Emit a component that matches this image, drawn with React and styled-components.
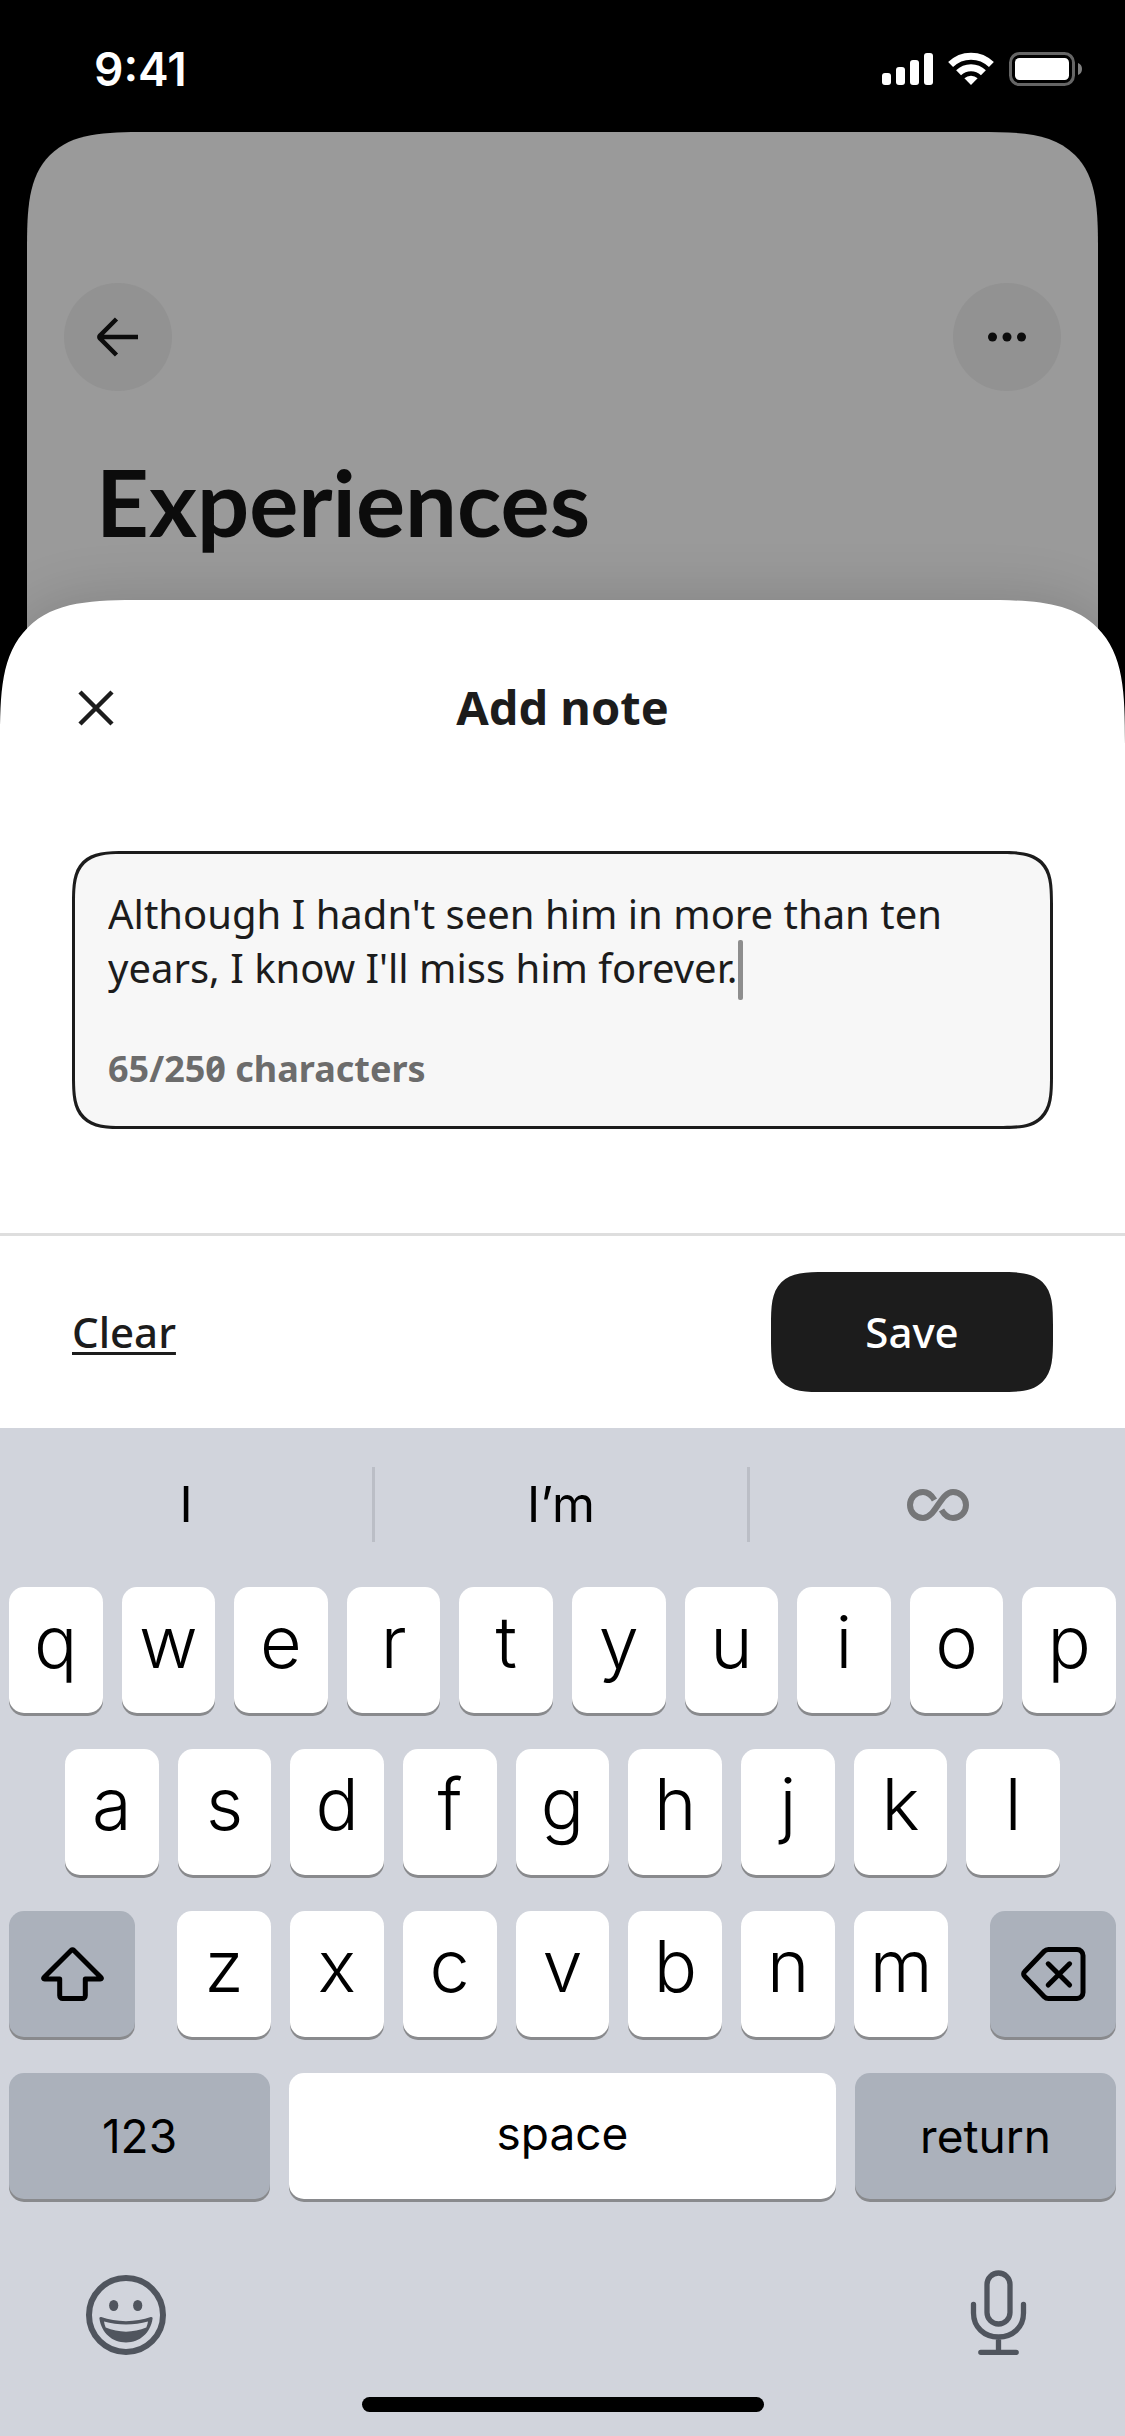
import React, { useState } from "react"
import styled, { createGlobalStyle, css } from "styled-components"

const systemFont = `Inter, "Liberation Sans", sans-serif`
const brandFont = `"Noto Sans", "Open Sans", sans-serif`

// Continuous corners where the browser has them, round ones elsewhere
const smoothCorners = (round, smooth, bottom = true) => css`
  border-radius: ${round}px ${round}px ${bottom ? round : 0}px ${bottom ? round : 0}px;
  @supports (corner-shape: superellipse(1.7)) {
    border-radius: ${smooth}px ${smooth}px ${bottom ? smooth : 0}px ${bottom ? smooth : 0}px;
    corner-shape: superellipse(1.7);
  }
`

const GlobalStyle = createGlobalStyle`
  * {
    box-sizing: border-box;
  }
  body {
    margin: 0;
    background: #000;
  }
  button, textarea {
    margin: 0;
    padding: 0;
    border: 0;
    background: none;
    color: inherit;
    font: inherit;
  }
  svg {
    display: block;
  }
`

const Screen = styled.div`
  display: flex;
  flex-direction: column;
  min-height: 100vh;
  background: #000;
  font-family: ${brandFont};
  color: #1c1c1c;
`

const StatusBar = styled.header`
  display: flex;
  justify-content: space-between;
  align-items: center;
  height: 132px;
  padding: 6px 43px 0 94px;
  color: #fff;
`

const Clock = styled.time`
  font-family: ${systemFont};
  font-size: 46px;
  font-weight: 600;
`

const StatusIcons = styled.div`
  display: flex;
  align-items: center;
  gap: 15px;
`

const Page = styled.main`
  margin: 0 27px;
  padding: 151px 37px 0;
  height: 568px;
  ${smoothCorners(80, 120, false)}
  background: #9a9a9a;
  color: #0c0c0c;
`

const Toolbar = styled.div`
  display: flex;
  justify-content: space-between;
`

const RoundButton = styled.button`
  display: flex;
  align-items: center;
  justify-content: center;
  width: 108px;
  height: 108px;
  border-radius: 50%;
  background: #929292;
`

const PageTitle = styled.h1`
  margin: 48px 0 0;
  padding: 0 32px;
  font-family: Lato, ${brandFont};
  font-size: 92px;
  font-weight: 700;
  line-height: 126px;
`

const Sheet = styled.section`
  margin-top: -100px;
  ${smoothCorners(96, 144, false)}
  background: #fff;
  box-shadow: 0 0 60px rgba(0, 0, 0, 0.16);
`

const SheetHeader = styled.div`
  display: grid;
  grid-template-columns: 48px 1fr 48px;
  align-items: center;
  height: 216px;
  padding: 0 72px;
`

const CloseButton = styled.button`
  display: flex;
  justify-content: center;
  padding: 6px 0;
`

const SheetTitle = styled.h2`
  margin: 0;
  padding-bottom: 2px;
  font-size: 47px;
  font-weight: 700;
  line-height: 64px;
  text-align: center;
`

const Field = styled.div`
  margin: 35px 72px 104px;
  padding: 33px;
  border: 3px solid #1c1c1c;
  ${smoothCorners(40, 54)}
  background: #f7f7f7;
`

const Editor = styled.div`
  display: grid;
  font-size: 40px;
  line-height: 54px;
`

const NoteInput = styled.textarea`
  grid-area: 1 / 1;
  width: 100%;
  overflow: hidden;
  resize: none;
  outline: none;
  caret-color: transparent;
`

// Same text as the textarea, it grows the grid cell and places the caret
const Mirror = styled.div`
  grid-area: 1 / 1;
  visibility: hidden;
  white-space: pre-wrap;
  overflow-wrap: break-word;
  pointer-events: none;
`

const Caret = styled.span`
  position: relative;
  &::after {
    content: "";
    position: absolute;
    top: 0;
    left: 0;
    width: 5px;
    height: 60px;
    border-radius: 2px;
    background: #8e8e8e;
    visibility: visible;
  }
`

const Counter = styled.p`
  margin: 50px 0 0;
  color: #6c6c6c;
  font-size: 36px;
  font-weight: 700;
  font-variant-numeric: slashed-zero;
  line-height: 48px;
`

const Actions = styled.footer`
  display: flex;
  justify-content: space-between;
  align-items: center;
  padding: 36px 72px;
  border-top: 3px solid #dedede;
  font-size: 42px;
  font-weight: 500;
`

const ActionButton = styled.button`
  padding-bottom: 2px;
`

const ClearButton = styled(ActionButton)`
  text-decoration: underline;
  text-decoration-thickness: 3px;
  text-underline-offset: 4px;
`

const SaveButton = styled(ActionButton)`
  width: 282px;
  height: 120px;
  ${smoothCorners(40, 54)}
  background: #1c1c1c;
  color: #fff;
`

const Keyboard = styled.section`
  flex: 1;
  display: flex;
  flex-direction: column;
  background: #d1d4dc;
  color: #000;
  font-family: ${systemFont};
`

const Suggestions = styled.div`
  display: grid;
  grid-template-columns: repeat(3, 1fr);
  padding: 39px 0 45px;
`

const Suggestion = styled.button`
  display: flex;
  align-items: center;
  justify-content: center;
  height: 75px;
  font-size: 49px;
  &:not(:last-child) {
    border-right: 3px solid #bbbec6;
  }
`

const Rows = styled.div`
  display: grid;
  gap: 36px;
`

const Row = styled.div`
  display: flex;
  gap: ${props => props.$wide ? "42px" : "19px"};
  padding: 0 ${props => props.$indent ? "65px" : "9px"};
`

const Letters = styled.div`
  flex: 1;
  display: flex;
  gap: 19px;
`

const Key = styled.button`
  flex: 1 1 0;
  display: flex;
  align-items: center;
  justify-content: center;
  min-width: 0;
  height: 126px;
  padding-bottom: 18px;
  border-radius: 15px;
  background: #fff;
  box-shadow: 0 3px 0 #898a8d;
  font-size: 72px;
  font-weight: 300;
`

const IconKey = styled(Key)`
  flex: 0 0 126px;
  padding: 0;
  background: #abb1bb;
`

const WordKey = styled(Key)`
  flex: ${props => props.$grow} 1 0;
  padding-bottom: ${props => props.$dark ? "0" : "6px"};
  background: ${props => props.$dark ? "#abb1bb" : "#fff"};
  font-size: 46px;
  font-weight: 400;
`

const KeyboardFooter = styled.div`
  display: flex;
  justify-content: space-between;
  align-items: flex-end;
  padding: 71px 98px 41px 85px;
  color: #50555e;
`

const HomeIndicator = styled.div`
  width: 402px;
  height: 15px;
  margin: 0 auto 24px;
  border-radius: 8px;
  background: #000;
`

const SignalIcon = () => (
  <svg width="51" height="33" viewBox="0 0 51 33" fill="#fff">
    <rect x="0" y="20" width="9" height="12" rx="3" />
    <rect x="14" y="14" width="9" height="18" rx="3" />
    <rect x="28" y="7" width="9" height="25" rx="3" />
    <rect x="42" y="0" width="9" height="32" rx="3" />
  </svg>
)

const WifiIcon = () => (
  <svg width="46" height="34" viewBox="0 0 46 34" fill="none" stroke="#fff" strokeWidth="7">
    <path d="M2.6 12.6a29 29 0 0 1 40.8 0" />
    <path d="M10.6 20.8a17.6 17.6 0 0 1 24.8 0" />
    <path d="M23 33l-6.6-6.7a9.5 9.5 0 0 1 13.2 0z" fill="#fff" stroke="none" />
  </svg>
)

const BatteryIcon = () => (
  <svg width="73" height="34" viewBox="0 0 73 34">
    <rect x="1.5" y="1.5" width="63" height="31" rx="9" fill="none" stroke="#666" strokeWidth="3" />
    <rect x="6" y="6" width="54" height="22" rx="4.5" fill="#fff" />
    <path d="M69 11c2.6 1 4 3.3 4 6s-1.4 5-4 6z" fill="#808080" />
  </svg>
)

const BackIcon = () => (
  <svg width="42" height="40" viewBox="0 0 42 40" fill="none" stroke="currentColor" strokeWidth="4.5">
    <path d="M41 20H2M19.5 2L3 18.5a2 2 0 0 0 0 3L19.5 38" />
  </svg>
)

const MoreIcon = () => (
  <svg width="38" height="10" viewBox="0 0 38 10" fill="currentColor">
    <circle cx="4.5" cy="5" r="4.5" />
    <circle cx="19" cy="5" r="4.5" />
    <circle cx="33.5" cy="5" r="4.5" />
  </svg>
)

const CloseIcon = () => (
  <svg width="36" height="36" viewBox="0 0 36 36" fill="none" stroke="#1c1c1c" strokeWidth="4.5">
    <path d="M2 2l32 32M34 2L2 34" />
  </svg>
)

const InfinityIcon = () => (
  <svg width="62" height="32" viewBox="0 0 62 32" fill="none" stroke="#757678" strokeWidth="6">
    <path d="M27.5 11C24.5 6 21 3 16 3C8.5 3 3 8.8 3 16S8.5 29 16 29C28.5 29 33.5 3 46 3C53.5 3 59 8.8 59 16S53.5 29 46 29C41 29 37.5 26 34.5 21" />
  </svg>
)

const ShiftIcon = () => (
  <svg width="63" height="54" viewBox="0 0 63 54" fill="none" stroke="#000" strokeWidth="5" strokeLinejoin="round">
    <path d="M30.3 3.2a1.7 1.7 0 0 1 2.4 0L60 30.5c.7.7.3 1.6-.6 1.6H44.3V48.5a3 3 0 0 1-3 3H21.7a3 3 0 0 1-3-3V32.1H3.6c-.9 0-1.3-.9-.6-1.6z" />
  </svg>
)

const DeleteIcon = () => (
  <svg width="65" height="54" viewBox="0 0 65 54" fill="none" stroke="#000" strokeWidth="5" strokeLinecap="round" strokeLinejoin="round">
    <path d="M27.5 2.5H56a6 6 0 0 1 6 6v37a6 6 0 0 1-6 6H27.5a6 6 0 0 1-4.3-1.8L3.6 29.3a3.2 3.2 0 0 1 0-4.6L23.2 4.3a6 6 0 0 1 4.3-1.8z" />
    <path d="M27.2 16.8l21.4 21.2M48.6 16.8L27.2 38" />
  </svg>
)

const EmojiIcon = () => (
  <svg width="82" height="82" viewBox="0 0 82 82" fill="currentColor">
    <circle cx="41" cy="41" r="37" fill="none" stroke="currentColor" strokeWidth="6" />
    <ellipse cx="28.7" cy="31.5" rx="4.6" ry="5.6" />
    <ellipse cx="52.7" cy="31.5" rx="4.6" ry="5.6" />
    <path fillRule="evenodd" d="M16.2 43C31 48.5 51 48.5 65.8 43c1.2-.4 2 .4 1.8 1.6C65.5 59 55 68.5 41 68.5S16.500 59 14.4 44.6c-.2-1.2.6-2 1.8-1.6zM19 47.6c.3 2 .8 4 1.7 6c12.8 5.4 27.8 5.4 40.6 0c.9-2 1.4-4 1.7-6c-14 3.8-30 3.8-44 0z" />
  </svg>
)

const MicIcon = () => (
  <svg width="57" height="86" viewBox="0 0 57 86" fill="none" stroke="currentColor" strokeWidth="5.3" strokeLinecap="round">
    <rect x="17" y="3" width="23" height="51" rx="11.5" />
    <path d="M3.5 34.5V43c0 14 10.5 24 25 24s25-10 25-24V34.5M28.5 67v15M10.8 82.3h35.4" />
  </svg>
)

const renderKeys = letters => letters.split("").map(letter => <Key key={letter}>{letter}</Key>)

const App = () => {
  const [note, setNote] = useState("Although I hadn't seen him in more than ten years, I know I'll miss him forever.")
  const [count, setCount] = useState(65)
  const updateNote = text => {
    setNote(text)
    setCount(text.length)
  }
  return (
    <Screen>
      <GlobalStyle />
      <StatusBar>
        <Clock>9:41</Clock>
        <StatusIcons>
          <SignalIcon />
          <WifiIcon />
          <BatteryIcon />
        </StatusIcons>
      </StatusBar>
      <Page>
        <Toolbar>
          <RoundButton aria-label="Back"><BackIcon /></RoundButton>
          <RoundButton aria-label="More"><MoreIcon /></RoundButton>
        </Toolbar>
        <PageTitle>Experiences</PageTitle>
      </Page>
      <Sheet>
        <SheetHeader>
          <CloseButton aria-label="Close"><CloseIcon /></CloseButton>
          <SheetTitle id="note-title">Add note</SheetTitle>
        </SheetHeader>
        <Field>
          <Editor>
            <Mirror aria-hidden="true">{note}<Caret /></Mirror>
            <NoteInput
              aria-labelledby="note-title"
              rows={1}
              maxLength={250}
              spellCheck={false}
              value={note}
              onChange={e => updateNote(e.target.value)}
            />
          </Editor>
          <Counter>{count}/250 characters</Counter>
        </Field>
        <Actions>
          <ClearButton onClick={() => updateNote("")}>Clear</ClearButton>
          <SaveButton>Save</SaveButton>
        </Actions>
      </Sheet>
      <Keyboard>
        <Suggestions>
          <Suggestion>I</Suggestion>
          <Suggestion>I’m</Suggestion>
          <Suggestion aria-label="Infinity"><InfinityIcon /></Suggestion>
        </Suggestions>
        <Rows>
          <Row>{renderKeys("qwertyuiop")}</Row>
          <Row $indent>{renderKeys("asdfghjkl")}</Row>
          <Row $wide>
            <IconKey aria-label="Shift"><ShiftIcon /></IconKey>
            <Letters>{renderKeys("zxcvbnm")}</Letters>
            <IconKey aria-label="Delete"><DeleteIcon /></IconKey>
          </Row>
          <Row>
            <WordKey $dark $grow={261}>123</WordKey>
            <WordKey $grow={547}>space</WordKey>
            <WordKey $dark $grow={261}>return</WordKey>
          </Row>
        </Rows>
        <KeyboardFooter>
          <button aria-label="Emoji"><EmojiIcon /></button>
          <button aria-label="Dictate"><MicIcon /></button>
        </KeyboardFooter>
        <HomeIndicator />
      </Keyboard>
    </Screen>
  )
}

export default App
